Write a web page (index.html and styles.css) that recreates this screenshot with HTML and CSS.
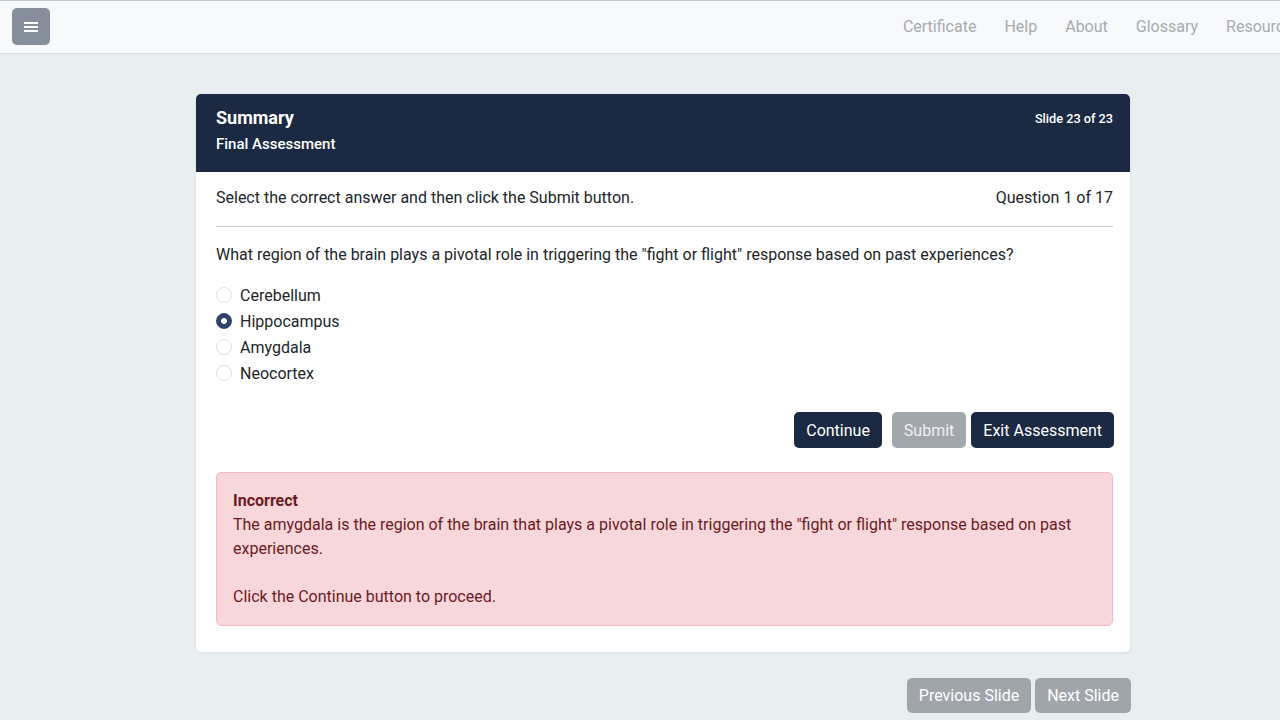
FILE: index.html
```html
<!DOCTYPE html>
<html lang="en">
<head>
<meta charset="utf-8">
<title>Final Assessment</title>
<link rel="stylesheet" href="styles.css">
</head>
<body>
<header class="navbar">
  <button class="menu-btn" aria-label="Menu">
    <svg width="14" height="12" viewBox="0 0 14 12"><rect x="0" y="1" width="14" height="2" fill="#fff"/><rect x="0" y="5" width="14" height="2" fill="#fff"/><rect x="0" y="9" width="14" height="2" fill="#fff"/></svg>
  </button>
  <nav class="nav-links">
    <a>Certificate</a>
    <a>Help</a>
    <a>About</a>
    <a>Glossary</a>
    <a>Resources</a>
  </nav>
</header>
<main class="main">
  <section class="card">
    <div class="card-header">
      <div class="titles">
        <div class="title">Summary</div>
        <div class="subtitle">Final Assessment</div>
      </div>
      <div class="slide-count">Slide 23 of 23</div>
    </div>
    <div class="card-body">
      <div class="instr-row">
        <span>Select the correct answer and then click the Submit button.</span>
        <span>Question 1 of 17</span>
      </div>
      <p class="question">What region of the brain plays a pivotal role in triggering the "fight or flight" response based on past experiences?</p>
      <ul class="options">
        <li><span class="radio"></span>Cerebellum</li>
        <li><span class="radio checked"></span>Hippocampus</li>
        <li><span class="radio"></span>Amygdala</li>
        <li><span class="radio"></span>Neocortex</li>
      </ul>
      <div class="actions">
        <button class="btn btn-dark">Continue</button>
        <button class="btn btn-disabled gap-left">Submit</button>
        <button class="btn btn-dark">Exit Assessment</button>
      </div>
      <div class="alert">
        <strong>Incorrect</strong>
        <p>The amygdala is the region of the brain that plays a pivotal role in triggering the "fight or flight" response based on past experiences.</p>
        <p class="spaced">Click the Continue button to proceed.</p>
      </div>
    </div>
  </section>
  <div class="slide-nav">
    <button class="btn btn-grey">Previous Slide</button>
    <button class="btn btn-grey">Next Slide</button>
  </div>
</main>
</body>
</html>
```
FILE: styles.css
```css
* { box-sizing: border-box; }
html, body { margin: 0; padding: 0; }
body {
  font-family: Roboto, "Liberation Sans", Arial, sans-serif;
  font-size: 16px;
  color: #212529;
  background: #e9eff1;
  overflow: hidden;
  height: 720px;
}
.navbar {
  height: 54px;
  background: #f8f9fa;
  border-top: 1px solid #c8cbce;
  border-bottom: 1px solid #dcdfe2;
  display: flex;
  align-items: center;
  justify-content: space-between;
  padding: 0 0 0 12px;
  white-space: nowrap;
  overflow: hidden;
}
.menu-btn {
  width: 38px;
  height: 37px;
  border: none;
  border-radius: 5px;
  background: #868e9c;
  display: flex;
  align-items: center;
  justify-content: center;
  padding: 0;
  margin-top: -1px;
}
.nav-links {
  display: flex;
  margin-right: -35px;
  margin-top: -2px;
}
.nav-links a {
  color: #a6abb1;
  font-size: 16px;
  padding: 0 14px;
}
.main {
  margin-left: 196px;
  width: 934px;
  padding-top: 40px;
}
.card {
  background: #fff;
  border-radius: 5px;
  box-shadow: 0 1px 3px rgba(0,0,0,0.08);
  overflow: hidden;
}
.card-header {
  background: #1b2942;
  color: #fff;
  height: 78px;
  padding: 13px 17px 0 20px;
  display: flex;
  justify-content: space-between;
  align-items: flex-start;
}
.title { font-size: 18px; font-weight: 700; line-height: 22px; }
.subtitle { font-size: 15px; font-weight: 500; margin-top: 6px; line-height: 18px; }
.slide-count { font-size: 12.7px; font-weight: 500; margin-top: 4px; }
.card-body { padding: 16px 17px 26px 20px; }
.instr-row {
  display: flex;
  justify-content: space-between;
  padding-bottom: 18px;
  border-bottom: 1px solid #c9cdd1;
  line-height: 20px;
}
.question { margin: 18px 0 0; line-height: 20px; }
.options { list-style: none; margin: 17px 0 0; padding: 0; }
.options li {
  display: flex;
  align-items: center;
  height: 26px;
}
.radio {
  width: 16px;
  height: 16px;
  border-radius: 50%;
  border: 1px solid #dee2e6;
  margin-right: 8px;
  display: inline-block;
}
.radio.checked {
  border-color: #2f4468;
  background: radial-gradient(circle, #fff 0 2.6px, #2f4468 3.2px);
}
.actions {
  display: flex;
  justify-content: flex-end;
  gap: 5px;
  margin-top: 26px;
  margin-right: -1px;
}
.gap-left { margin-left: 5px; }
.btn {
  font-family: inherit;
  font-size: 16px;
  height: 36px;
  padding: 0 12px;
  border: none;
  border-radius: 5px;
  color: #fff;
}
.btn-dark { background: #1b2942; }
.btn-disabled { background: #a2a6ad; color: #eef0f2; }
.alert {
  margin-top: 24px;
  background: #f8d7da;
  border: 1px solid #f1b9be;
  border-radius: 5px;
  color: #6c1a22;
  padding: 16px 16px 16px 16px;
  line-height: 24px;
}
.alert strong { display: block; font-weight: 700; }
.alert p { margin: 0; }
.alert p.spaced { margin-top: 24px; }
.slide-nav {
  display: flex;
  justify-content: flex-end;
  gap: 4px;
  margin-top: 26px;
  margin-right: -1px;
}
.btn-grey { background: #a0a5ab; height: 35px; }
```
